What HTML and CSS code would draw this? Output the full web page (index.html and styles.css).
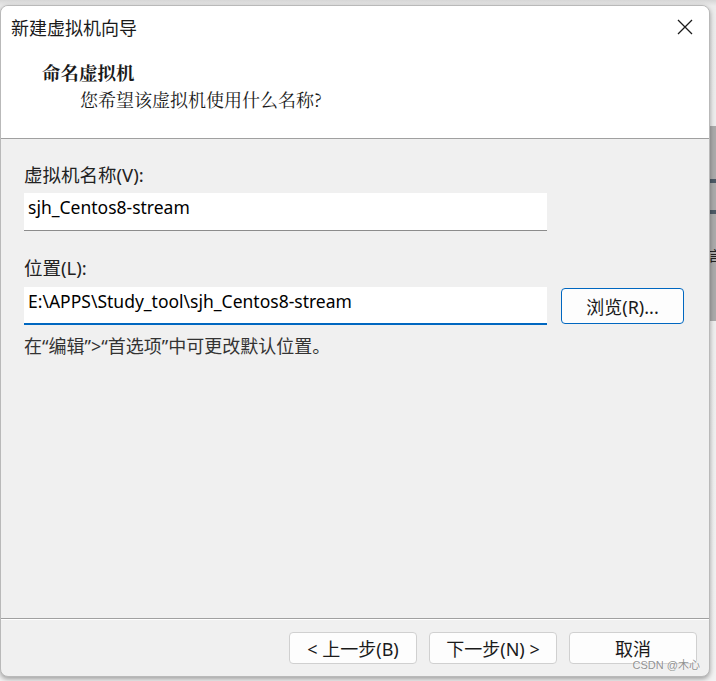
FILE: index.html
```html
<!DOCTYPE html>
<html>
<head>
    <meta name="viewport" content="width=device-width, initial-scale=1.0">
    <link rel="stylesheet" href="styles.css">
</head>
<body>

<div class="wizard">
    <div class="wizard-head">
        <div class="title-bar">
            <span class="title">新建虚拟机向导</span>
            <svg class="close" width="16" height="16" viewBox="0 0 16 16">
                <path d="M1 1 L15 15 M15 1 L1 15" stroke="#1b1b1b" stroke-width="1.3" fill="none"/>
            </svg>
        </div>
        <div class="step-title">命名虚拟机</div>
        <div class="step-desc">您希望该虚拟机使用什么名称?</div>
    </div>

    <div class="wizard-body">
        <div class="field-label">虚拟机名称(V):</div>
        <div class="text-box">sjh_Centos8-stream</div>

        <div class="field-label second">位置(L):</div>
        <div class="path-row">
            <div class="text-box focused">E:\APPS\Study_tool\sjh_Centos8-stream</div>
            <div class="btn browse">浏览(R)...</div>
        </div>
        <div class="hint">在“编辑”&gt;“首选项”中可更改默认位置。</div>
    </div>

    <div class="wizard-foot">
        <div class="btn">&lt; 上一步(B)</div>
        <div class="btn">下一步(N) &gt;</div>
        <div class="btn">取消</div>
        <div class="watermark">CSDN @木心</div>
    </div>
</div>

<!-- bit of the window behind -->
<div class="behind">
    <div class="behind-panel">
        <div class="mark"></div>
        <div class="mark"></div>
        <div class="behind-text">言</div>
    </div>
</div>

</body>
</html>
```

FILE: styles.css
```css
* {box-sizing: border-box;}

body {
    margin: 0;
    width: 716px;
    height: 681px;
    overflow: hidden;
    display: flex;
    align-items: flex-start;
    background: linear-gradient(#d6d6d6, #ececec 6px, #f2f2f2);
    font-family: "Noto Sans", "Noto Sans CJK SC", sans-serif;
    color: #1a1a1a;
}

.wizard {
    position: relative;
    flex: none;
    width: 710px;
    height: 672px;
    margin-top: 5px;
    display: flex;
    flex-direction: column;
    background-color: #f0f0f0;
    border: 1px solid #b9b9b9;
    border-radius: 8px;
    box-shadow: 0 2px 5px rgba(0, 0, 0, 0.35);
    overflow: hidden;
}

.wizard-head {
    height: 133px;
    background-color: #ffffff;
    border-bottom: 1px solid #a0a0a0;
}

.title-bar {
    height: 44px;
    display: flex;
    align-items: center;
    justify-content: space-between;
    padding: 0 16px 0 10px;
}

.title {
    font-size: 18px;
    line-height: 24px;
}

.close {
    display: block;
    margin-top: -2px;
}

.step-title {
    margin-top: 10px;
    padding-left: 41px;
    font-family: "Noto Serif CJK SC", "Noto Sans CJK SC", serif;
    font-size: 18.5px;
    font-weight: bold;
    line-height: 24px;
}

.step-desc {
    margin-top: 3px;
    padding-left: 79px;
    font-family: "Noto Serif CJK SC", "Noto Sans CJK SC", serif;
    font-size: 18px;
    line-height: 24px;
}

.wizard-body {
    flex: 1;
    padding: 24px 0 0 23px;
}

.field-label {
    font-size: 18.5px;
    line-height: 24px;
    color: #222;
}

.field-label.second {
    margin-top: 25px;
}

.text-box {
    width: 523px;
    height: 38px;
    margin-top: 6px;
    padding: 0 4px;
    background-color: #ffffff;
    border-bottom: 1px solid #8c8c8c;
    font-size: 17.5px;
    line-height: 29px;
    color: #000;
}

.text-box.focused {
    border-bottom: 2px solid #0067c0;
}

.path-row {
    display: flex;
    align-items: flex-start;
    gap: 14px;
    margin-top: 1px;
}

.btn {
    width: 128px;
    height: 32px;
    display: flex;
    align-items: center;
    justify-content: center;
    background-color: #fdfdfd;
    border: 1px solid #d0d0d0;
    border-radius: 4px;
    font-size: 18px;
    color: #1a1a1a;
}

.btn.browse {
    width: 123px;
    height: 36px;
    margin-top: 7px;
    border-color: #0067c0;
}

.hint {
    margin-top: 9px;
    font-size: 18px;
    line-height: 24px;
    color: #333;
}

.wizard-foot {
    position: relative;
    height: 58px;
    display: flex;
    justify-content: flex-end;
    gap: 12px;
    padding: 13px 12px 0 0;
    border-top: 1px solid #a0a0a0;
    box-shadow: inset 0 1px 0 #ffffff;
}

.watermark {
    position: absolute;
    right: 9px;
    bottom: 5px;
    font-family: "Liberation Sans", "Noto Sans CJK SC", sans-serif;
    font-size: 11px;
    line-height: 12px;
    color: rgba(110, 110, 110, 0.75);
    text-shadow: 0 0 2px #fff;
}

.behind {
    flex: none;
    width: 6px;
    height: 681px;
    overflow: hidden;
}

.behind-panel {
    margin-top: 126px;
    height: 195px;
    background-color: #ababab;
    padding-top: 53px;
}

.mark {
    height: 4px;
    background-color: #4d5a66;
    margin-bottom: 27px;
}

.behind-text {
    margin-top: 33px;
    margin-left: -2px;
    font-family: "Noto Sans CJK SC", sans-serif;
    font-size: 14px;
    line-height: 16px;
    color: #222;
}
```
